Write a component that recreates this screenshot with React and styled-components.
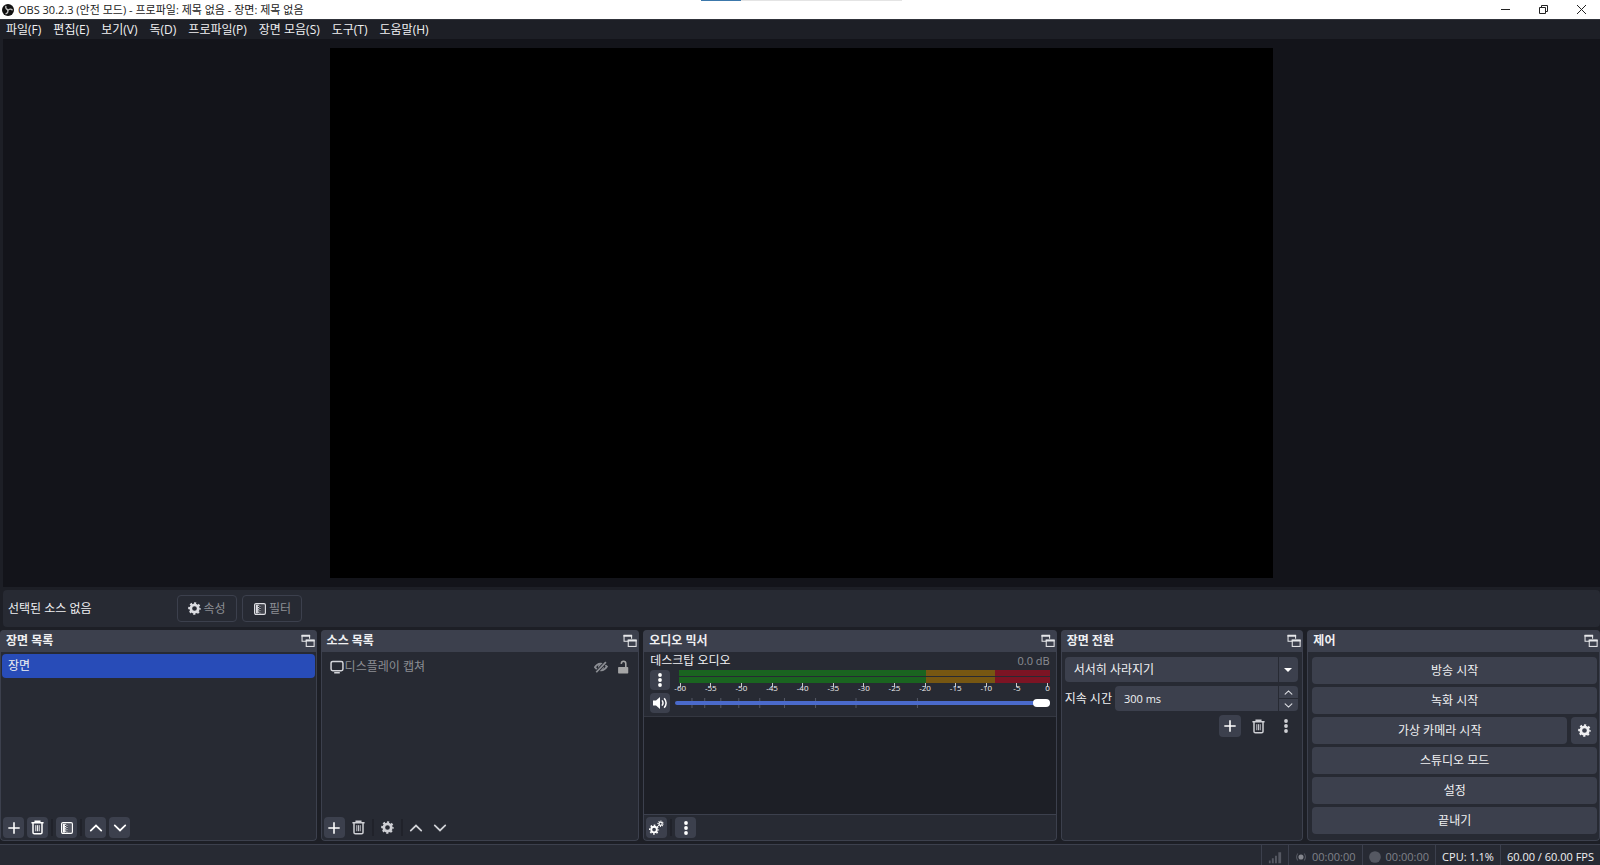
import React, { useState } from 'react';
import styled, { createGlobalStyle } from 'styled-components';

const palette = {
  window: '#1d1f26',
  preview: '#13141a',
  panel: '#272a33',
  button: '#3c404d',
  line: '#3c404d',
  primary: '#284cb8',
  slider: '#4a6acb',
  text: '#f0f0f2',
  muted: '#8c8e94',
};

const GlobalStyle = createGlobalStyle`
  * {
    box-sizing: border-box;
  }
  body {
    margin: 0;
    background: ${palette.window};
    color: ${palette.text};
    overflow: hidden;
  }
  body, button, input, select {
    font-family: 'Open Sans', 'Noto Sans CJK KR', sans-serif;
    font-size: 12px;
    line-height: 16px;
  }
  svg {
    display: block;
    flex: none;
  }
`;

/**
 * 아이콘
 */
const Svg = ({ size = 14, children, ...rest }) => (
  <svg width={size} height={size} viewBox="0 0 16 16" fill="none" stroke="currentColor" aria-hidden="true" {...rest}>
    {children}
  </svg>
);

const LogoIcon = () => (
  <Svg size={12} stroke="none">
    <circle cx="8" cy="8" r="8" fill="#111" />
    <g fill="none" stroke="#c4c4c4" strokeWidth="1.8">
      <path d="M5.2 2.6 C4.4 5.6 6 7.4 8.4 7.6" />
      <path d="M5.2 2.6 C4.4 5.6 6 7.4 8.4 7.6" transform="rotate(120 8 8)" />
      <path d="M5.2 2.6 C4.4 5.6 6 7.4 8.4 7.6" transform="rotate(240 8 8)" />
    </g>
  </Svg>
);

const PlusIcon = () => (
  <Svg>
    <path d="M8 1.5V14.5M1.5 8H14.5" strokeWidth="1.8" />
  </Svg>
);

const TrashIcon = () => (
  <Svg size={15}>
    <path d="M1.5 3H14.5M5.5 2.4V1.3H10.5V2.4" strokeWidth="1.5" />
    <path d="M3.2 3V13.2Q3.2 14.7 4.7 14.7H11.3Q12.8 14.7 12.8 13.2V3" strokeWidth="1.6" />
    <path d="M6.2 5.5V12M8 5.5V12M9.8 5.5V12" strokeWidth="1" />
  </Svg>
);

const GearIcon = ({ size = 13 }) => (
  <Svg size={size}>
    <circle cx="8" cy="8" r="4.6" strokeWidth="3.4" />
    <circle cx="8" cy="8" r="6.6" strokeWidth="2.4" strokeDasharray="2.6 2.584" strokeDashoffset="1.3" />
  </Svg>
);

const GearsIcon = () => (
  <Svg size={15}>
    <circle cx="5.4" cy="10.2" r="3" strokeWidth="2" />
    <circle cx="5.4" cy="10.2" r="4.6" strokeWidth="1.6" strokeDasharray="1.8 1.813" strokeDashoffset="0.9" />
    <circle cx="12.4" cy="4" r="1.7" strokeWidth="1.3" />
    <circle cx="12.4" cy="4" r="2.8" strokeWidth="1.2" strokeDasharray="1.1 1.099" strokeDashoffset="0.5" />
  </Svg>
);

const FilterIcon = () => (
  <Svg>
    <rect x="1.8" y="1.8" width="12.4" height="12.4" rx="1.6" strokeWidth="1.3" />
    <path d="M3.2 3H5.6V13H3.2Z" fill="currentColor" stroke="none" />
    <path d="M6.4 3V13" strokeWidth="1.4" strokeDasharray="1.4 1.2" />
    <path d="M8 4.2V13" strokeWidth="1.2" strokeDasharray="1.2 1.4" />
    <path d="M9 2.5H13.6V13.5H9Z" fill="currentColor" stroke="none" opacity="0.15" />
  </Svg>
);

const UpIcon = ({ size = 14 }) => (
  <Svg size={size}>
    <path d="M2 11L8 5.2L14 11" strokeWidth="2" strokeLinecap="round" />
  </Svg>
);

const DownIcon = ({ size = 14 }) => (
  <Svg size={size}>
    <path d="M2 5L8 10.8L14 5" strokeWidth="2" strokeLinecap="round" />
  </Svg>
);

const DotsIcon = () => (
  <Svg size={16} fill="currentColor" stroke="none">
    <circle cx="8" cy="3" r="1.9" />
    <circle cx="8" cy="8" r="1.9" />
    <circle cx="8" cy="13" r="1.9" />
  </Svg>
);

const SpeakerIcon = () => (
  <Svg size={16}>
    <path d="M1 5.6H4L8 2V14L4 10.4H1Z" fill="currentColor" stroke="none" />
    <path d="M10 5.4Q12 8 10 10.6M12.2 3.2Q16 8 12.2 12.8" strokeWidth="1.5" />
  </Svg>
);

const PopoutIcon = () => (
  <Svg>
    <path d="M6 8.2H1.2V1.6H9.8V5.4" strokeWidth="1.2" />
    <path d="M0.6 2H10.4" strokeWidth="2.2" />
    <rect x="6" y="7.2" width="9" height="7" strokeWidth="1.2" />
    <path d="M5.4 7.4H15.6" strokeWidth="2.2" />
  </Svg>
);

const MonitorIcon = () => (
  <Svg>
    <rect x="1.2" y="1.8" width="13.6" height="10.6" rx="2" strokeWidth="1.7" />
    <path d="M4.8 14.5H11.2" strokeWidth="1.6" />
  </Svg>
);

const HiddenIcon = () => (
  <Svg>
    <path d="M1 8.2C4 3 10.5 2.6 14.8 7.4C11.5 13 5 13.4 1 8.2Z" strokeWidth="2" />
    <circle cx="8" cy="8" r="2.4" strokeWidth="2" />
    <path d="M2.6 14L13.6 2.4" stroke={palette.panel} strokeWidth="4" />
    <path d="M2.6 14L13.6 2.4" strokeWidth="2" />
  </Svg>
);

const UnlockIcon = () => (
  <Svg>
    <rect x="2.4" y="8" width="11.6" height="7.4" rx="0.8" fill="currentColor" stroke="none" />
    <path d="M11.2 8V4.2Q11.2 1.4 8.6 1.4Q6.2 1.4 6 4.4" strokeWidth="1.8" />
  </Svg>
);

const CaretIcon = () => (
  <svg width="8" height="4" viewBox="0 0 8 4" fill="#fff" aria-hidden="true">
    <path d="M0 0H8L4 4Z" />
  </svg>
);

const SignalIcon = () => (
  <Svg fill="currentColor" stroke="none">
    <path d="M1 12H3V15H1ZM4.4 9.5H6.6V15H4.4ZM8 6.5H10.2V15H8ZM11.8 2.5H15V15H11.8Z" />
  </Svg>
);

const BroadcastIcon = () => (
  <Svg size={12}>
    <circle cx="8" cy="8" r="3.4" fill="#85878e" stroke="none" />
    <path d="M3.8 3.4Q0.4 8 3.8 12.6M12.2 3.4Q15.6 8 12.2 12.6" strokeWidth="1.4" />
  </Svg>
);

const RecordIcon = () => (
  <Svg size={12} fill="currentColor" stroke="none">
    <circle cx="8" cy="8" r="7.8" />
  </Svg>
);

/**
 * 창 전체
 */
const Window = styled.div`
  display: flex;
  flex-direction: column;
  height: 100vh;
`;

const TitleBar = styled.header`
  position: relative;
  display: flex;
  flex: none;
  align-items: center;
  height: 19px;
  padding-left: 2px;
  gap: 4px;
  background: #fff;
  color: #1a1a1a;
  white-space: nowrap;
`;

const WindowTitle = styled.h1`
  flex: 1;
  margin: 0;
  font-size: 11px;
  font-weight: 400;
`;

/* 창 위쪽에 걸친 진행 막대 */
const TopProgress = styled.div`
  position: absolute;
  top: 0;
  left: 50%;
  width: 201px;
  height: 1px;
  margin-left: -99px;
  background: linear-gradient(to right, #3c78ab 20%, #e4e4e4 20%);
`;

const WindowButtons = styled.div`
  display: flex;
`;

const WindowButton = styled.button`
  display: grid;
  place-items: center;
  width: 38px;
  height: 17px;
  padding: 0;
  border: none;
  background: none;
  color: #222;
`;

const MenuBar = styled.nav`
  display: flex;
  flex: none;
  align-items: center;
  gap: 12px;
  height: 20px;
  padding: 0 6px;
  border-top: 1px solid #30333a;
  white-space: nowrap;
`;

const MenuLink = styled.a`
  color: ${palette.text};
  text-decoration: none;
`;

const Preview = styled.main`
  display: flex;
  flex: 1;
  justify-content: center;
  min-height: 0;
  margin-left: 3px;
  padding: 9px 0;
  background: ${palette.preview};
`;

const Canvas = styled.div`
  height: 100%;
  aspect-ratio: 16 / 9;
  background: #000;
`;

const ContextBar = styled.section`
  display: flex;
  flex: none;
  align-items: center;
  gap: 5px;
  height: 37px;
  margin: 3px 0 3px 3px;
  padding: 0 5px;
  border-radius: 4px;
  background: ${palette.panel};
`;

const ContextLabel = styled.span`
  width: 164px;
`;

const ContextButton = styled.button`
  display: flex;
  align-items: center;
  justify-content: center;
  gap: 2px;
  width: 60px;
  height: 27px;
  padding: 0;
  border: 1px solid ${palette.line};
  border-radius: 4px;
  background: none;
  color: ${palette.muted};

  svg {
    color: #dcdde2;
  }
`;

/**
 * 하단 독
 */
const Docks = styled.div`
  display: grid;
  flex: none;
  grid-template-columns: 317fr 319fr 414fr 243fr 293fr;
  gap: 4px;
`;

const DockPanel = styled.section`
  display: flex;
  flex-direction: column;
  min-width: 0;
  border-radius: 4px;
  overflow: hidden;
  background: ${palette.panel};
`;

const DockHeader = styled.div`
  display: flex;
  align-items: center;
  justify-content: space-between;
  height: 22px;
  padding: 0 2px 0 6px;
  background: ${palette.button};
`;

const DockTitle = styled.h2`
  margin: 0;
  font-size: 12px;
  font-weight: 700;
`;

const DockBody = styled.div`
  display: flex;
  flex: 1;
  flex-direction: column;
  border: 1px solid ${palette.line};
  border-top: none;
  border-radius: 0 0 4px 4px;
`;

const IconButton = styled.button`
  display: grid;
  place-items: center;
  width: ${(props) => props.$size || 21}px;
  height: ${(props) => props.$size || 21}px;
  padding: 0;
  border: none;
  border-radius: 4px;
  background: ${(props) => (props.$flat ? 'transparent' : palette.button)};
  color: ${(props) => (props.$flat ? '#cfd0d5' : '#fff')};
`;

const PlainIconButton = styled(IconButton)`
  width: 14px;
  height: 14px;
  border-radius: 0;
  background: none;
  color: ${(props) => props.$color || '#e6e7ea'};
`;

const Toolbar = styled.div`
  display: flex;
  gap: 3px;
  padding: 2px;
`;

const Separator = styled.span`
  width: 2px;
  height: 17px;
  margin-top: 2px;
  background: #20222a;
`;

const List = styled.ul`
  flex: 1;
  margin: 0;
  padding: 2px 1px;
  list-style: none;
`;

const SceneItem = styled.li`
  height: 24px;
  padding: 4px 6px;
  border-radius: 4px;
  background: ${palette.primary};
`;

const SourceItem = styled.li`
  display: flex;
  align-items: center;
  gap: 8px;
  height: 26px;
  padding: 0 7px;
  color: ${palette.muted};
`;

const SourceName = styled.span`
  display: flex;
  flex: 1;
  align-items: center;
  gap: 1px;

  svg {
    color: #d4d5da;
  }
`;

/**
 * 오디오 믹서
 */
const Channel = styled.div`
  padding: 0 6px 3px;
  border-bottom: 1px solid #343741;
`;

const ChannelHead = styled.div`
  display: flex;
  align-items: center;
  justify-content: space-between;
  height: 18px;
`;

const Volume = styled.output`
  font-size: 11px;
  color: ${palette.muted};
`;

const ChannelGrid = styled.div`
  display: grid;
  grid-template-columns: 20px 1fr;
  column-gap: 5px;
  row-gap: 2px;
`;

const MeterBox = styled.div`
  padding-left: 4px;
`;

const MeterBar = styled.div`
  height: 6px;
  margin-bottom: 1px;
  background: linear-gradient(
    to right,
    #1a6420 66.7%,
    #775712 66.7% 85.1%,
    #7c1424 85.1%
  );
`;

const Scale = styled.div`
  display: flex;
  justify-content: space-between;
  height: 7px;
  padding: 0 2px 0 1px;
`;

const ScaleMark = styled.span`
  position: relative;
  display: flex;
  justify-content: center;
  width: 0;
  font-size: 8px;
  line-height: 8px;

  &::before {
    content: '';
    position: absolute;
    top: -1px;
    width: 1px;
    height: 4px;
    background: #c8c9ce;
  }
`;

const Fader = styled.div`
  position: relative;
  display: flex;
  align-items: center;
  height: 20px;
`;

const FaderTicks = styled.svg`
  position: absolute;
  top: 5px;
  left: 0;
  width: 100%;
  height: 10px;
`;

const FaderInput = styled.input`
  position: relative;
  width: 100%;
  height: 8px;
  margin: 0;
  appearance: none;
  background: none;

  &::-webkit-slider-runnable-track {
    height: 4px;
    border-radius: 2px;
    background: ${palette.slider};
  }
  &::-webkit-slider-thumb {
    width: 17px;
    height: 8px;
    margin-top: -2px;
    appearance: none;
    border-radius: 4px;
    background: #fff;
  }
`;

const MixerSpace = styled.div`
  flex: 1;
  border-bottom: 1px solid ${palette.line};
  background: ${palette.window};
`;

/**
 * 장면 전환
 */
const TransitionForm = styled.form`
  display: flex;
  flex-direction: column;
  gap: 4px;
  padding: 5px 4px 0 3px;
`;

const Field = styled.div`
  display: flex;
  flex: 1;
  height: 25px;
  border-radius: 4px;
  overflow: hidden;
  background: ${palette.button};
`;

const SelectField = styled(Field)`
  position: relative;
  flex: none;

  svg {
    position: absolute;
    top: 11px;
    right: 6px;
    pointer-events: none;
  }
`;

const Select = styled.select`
  width: 100%;
  padding: 0 9px;
  appearance: none;
  border: none;
  outline: none;
  color: ${palette.text};
  background: linear-gradient(${palette.panel}, ${palette.panel}) right 19px top / 1px 100% no-repeat ${palette.button};
`;

const DurationRow = styled.div`
  display: flex;
  align-items: center;
  gap: 3px;
`;

const DurationInput = styled.input`
  flex: 1;
  min-width: 0;
  padding: 0 9px;
  border: none;
  outline: none;
  background: none;
  color: ${palette.text};
  font-size: 11px;
`;

const Stepper = styled.div`
  display: grid;
  grid-template-rows: 1fr 1fr;
  gap: 1px;
  width: 20px;
  padding-left: 1px;
  background: ${palette.panel};
`;

const StepButton = styled.button`
  display: grid;
  place-items: center;
  padding: 0;
  border: none;
  background: ${palette.button};
  color: #dcdde2;
`;

const TransitionActions = styled.div`
  display: flex;
  justify-content: flex-end;
  gap: 6px;
  padding-right: 1px;
`;

/**
 * 제어
 */
const Controls = styled.div`
  display: flex;
  flex-direction: column;
  gap: 3px;
  padding: 5px 2px 6px 4px;
`;

const ControlRow = styled.div`
  display: flex;
  gap: 4px;
`;

const ControlButton = styled.button`
  display: grid;
  flex: ${(props) => (props.$square ? 'none' : '1 0 auto')};
  place-items: center;
  width: ${(props) => (props.$square ? '26px' : 'auto')};
  height: 27px;
  padding: 0;
  border: none;
  border-radius: 4px;
  background: ${palette.button};
  color: ${palette.text};
`;

/**
 * 상태 표시줄
 */
const StatusBar = styled.footer`
  display: flex;
  flex: none;
  justify-content: flex-end;
  height: 21px;
  margin-top: 3px;
  border-top: 1px solid ${palette.line};
  background: ${palette.panel};
`;

const StatusItem = styled.div`
  display: flex;
  align-items: center;
  gap: 5px;
  padding: 4px 6px 0;
  border-left: 1px solid ${palette.line};
  color: ${(props) => (props.$active ? palette.text : '#7f8189')};
  font-size: 11px;
  white-space: nowrap;

  svg {
    color: #555862;
  }
`;

const menus = ['파일(F)', '편집(E)', '보기(V)', '독(D)', '프로파일(P)', '장면 모음(S)', '도구(T)', '도움말(H)'];
const levels = [-60, -55, -50, -45, -40, -35, -30, -25, -20, -15, -10, -5, 0];
const faderTicks = [4.4, 7.8, 12.1, 16.9, 22.5, 29.1, 37.4, 48.2, 64.6];

const Dock = ({ title, children }) => (
  <DockPanel aria-label={title}>
    <DockHeader>
      <DockTitle>{title}</DockTitle>
      <PlainIconButton aria-label={`${title} 분리`}>
        <PopoutIcon />
      </PlainIconButton>
    </DockHeader>
    <DockBody>{children}</DockBody>
  </DockPanel>
);

const AudioChannel = () => {
  const [volume, setVolume] = useState(100);
  return (
    <Channel>
      <ChannelHead>
        <label htmlFor="desktop-audio">데스크탑 오디오</label>
        <Volume htmlFor="desktop-audio">0.0 dB</Volume>
      </ChannelHead>
      <ChannelGrid>
        <IconButton $size={20} aria-label="오디오 메뉴">
          <DotsIcon />
        </IconButton>
        <MeterBox>
          <MeterBar />
          <MeterBar />
          <Scale>
            {levels.map((level) => (
              <ScaleMark key={level}>{level}</ScaleMark>
            ))}
          </Scale>
        </MeterBox>
        <IconButton $size={20} aria-label="음소거">
          <SpeakerIcon />
        </IconButton>
        <Fader>
          <FaderTicks aria-hidden="true">
            {faderTicks.map((x) => (
              <rect key={x} x={`${x}%`} y="0" width="1" height="10" fill="#555966" />
            ))}
          </FaderTicks>
          <FaderInput
            id="desktop-audio"
            type="range"
            min="0"
            max="100"
            value={volume}
            onChange={(e) => setVolume(e.target.value)}
          />
        </Fader>
      </ChannelGrid>
    </Channel>
  );
};

const Transitions = () => {
  const [duration, setDuration] = useState('300 ms');
  const step = (amount) => setDuration(`${Math.max(50, parseInt(duration, 10) + amount)} ms`);
  return (
    <TransitionForm onSubmit={(e) => e.preventDefault()}>
      <SelectField>
        <Select aria-label="장면 전환 효과" defaultValue="fade">
          <option value="fade">서서히 사라지기</option>
        </Select>
        <CaretIcon />
      </SelectField>
      <DurationRow>
        <label htmlFor="duration">지속 시간</label>
        <Field>
          <DurationInput id="duration" value={duration} onChange={(e) => setDuration(e.target.value)} />
          <Stepper>
            <StepButton type="button" aria-label="늘리기" onClick={() => step(50)}>
              <UpIcon size={9} />
            </StepButton>
            <StepButton type="button" aria-label="줄이기" onClick={() => step(-50)}>
              <DownIcon size={9} />
            </StepButton>
          </Stepper>
        </Field>
      </DurationRow>
      <TransitionActions>
        <IconButton type="button" $size={22} aria-label="추가">
          <PlusIcon />
        </IconButton>
        <IconButton type="button" $size={22} $flat aria-label="삭제">
          <TrashIcon />
        </IconButton>
        <IconButton type="button" $size={22} $flat aria-label="메뉴">
          <DotsIcon />
        </IconButton>
      </TransitionActions>
    </TransitionForm>
  );
};

const App = () => {
  return (
    <Window>
      <GlobalStyle />
      <TitleBar>
        <LogoIcon />
        <WindowTitle>OBS 30.2.3 (안전 모드) - 프로파일: 제목 없음 - 장면: 제목 없음</WindowTitle>
        <TopProgress />
        <WindowButtons>
          <WindowButton aria-label="최소화">
            <svg width="9" height="9" viewBox="0 0 9 9" stroke="currentColor">
              <path d="M0 4.5H9" />
            </svg>
          </WindowButton>
          <WindowButton aria-label="이전 크기로">
            <svg width="9" height="9" viewBox="0 0 9 9" stroke="currentColor" fill="none">
              <path d="M0.5 2.5H6.5V8.5H0.5ZM2.5 2.5V0.5H8.5V6.5H6.5" />
            </svg>
          </WindowButton>
          <WindowButton aria-label="닫기">
            <svg width="9" height="9" viewBox="0 0 9 9" stroke="currentColor">
              <path d="M0 0L9 9M9 0L0 9" />
            </svg>
          </WindowButton>
        </WindowButtons>
      </TitleBar>
      <MenuBar>
        {menus.map((menu) => (
          <MenuLink key={menu} href="#">
            {menu}
          </MenuLink>
        ))}
      </MenuBar>
      <Preview>
        <Canvas />
      </Preview>
      <ContextBar>
        <ContextLabel>선택된 소스 없음</ContextLabel>
        <ContextButton>
          <GearIcon />
          속성
        </ContextButton>
        <ContextButton>
          <FilterIcon />
          필터
        </ContextButton>
      </ContextBar>
      <Docks>
        <Dock title="장면 목록">
          <List>
            <SceneItem>장면</SceneItem>
          </List>
          <Toolbar>
            <IconButton aria-label="장면 추가"><PlusIcon /></IconButton>
            <IconButton aria-label="장면 삭제"><TrashIcon /></IconButton>
            <Separator />
            <IconButton aria-label="장면 필터"><FilterIcon /></IconButton>
            <Separator />
            <IconButton aria-label="장면 위로"><UpIcon /></IconButton>
            <IconButton aria-label="장면 아래로"><DownIcon /></IconButton>
          </Toolbar>
        </Dock>
        <Dock title="소스 목록">
          <List>
            <SourceItem>
              <SourceName>
                <MonitorIcon />
                디스플레이 캡쳐
              </SourceName>
              <PlainIconButton $color={palette.muted} aria-label="표시">
                <HiddenIcon />
              </PlainIconButton>
              <PlainIconButton $color="#a5a5a6" aria-label="잠금">
                <UnlockIcon />
              </PlainIconButton>
            </SourceItem>
          </List>
          <Toolbar>
            <IconButton aria-label="소스 추가"><PlusIcon /></IconButton>
            <IconButton $flat aria-label="소스 삭제"><TrashIcon /></IconButton>
            <Separator />
            <IconButton $flat aria-label="소스 속성"><GearIcon /></IconButton>
            <Separator />
            <IconButton $flat aria-label="소스 위로"><UpIcon /></IconButton>
            <IconButton $flat aria-label="소스 아래로"><DownIcon /></IconButton>
          </Toolbar>
        </Dock>
        <Dock title="오디오 믹서">
          <AudioChannel />
          <MixerSpace />
          <Toolbar>
            <IconButton aria-label="고급 오디오 속성"><GearsIcon /></IconButton>
            <Separator />
            <IconButton aria-label="믹서 메뉴"><DotsIcon /></IconButton>
          </Toolbar>
        </Dock>
        <Dock title="장면 전환">
          <Transitions />
        </Dock>
        <Dock title="제어">
          <Controls>
            <ControlButton>방송 시작</ControlButton>
            <ControlButton>녹화 시작</ControlButton>
            <ControlRow>
              <ControlButton>가상 카메라 시작</ControlButton>
              <ControlButton $square aria-label="가상 카메라 설정">
                <GearIcon />
              </ControlButton>
            </ControlRow>
            <ControlButton>스튜디오 모드</ControlButton>
            <ControlButton>설정</ControlButton>
            <ControlButton>끝내기</ControlButton>
          </Controls>
        </Dock>
      </Docks>
      <StatusBar>
        <StatusItem>
          <SignalIcon />
        </StatusItem>
        <StatusItem>
          <BroadcastIcon />
          00:00:00
        </StatusItem>
        <StatusItem>
          <RecordIcon />
          00:00:00
        </StatusItem>
        <StatusItem $active>CPU: 1.1%</StatusItem>
        <StatusItem $active>60.00 / 60.00 FPS</StatusItem>
      </StatusBar>
    </Window>
  );
};

export default App;
